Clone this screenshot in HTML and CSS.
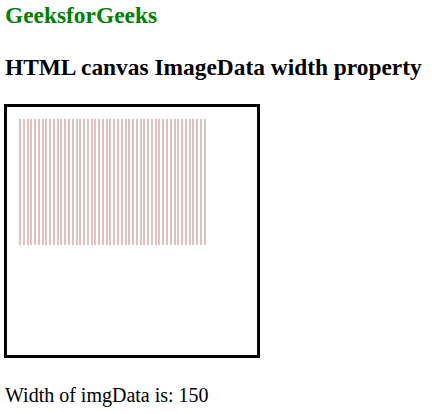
FILE: index.html
```html
<!DOCTYPE html>
<html>
<head>
<meta charset="utf-8">
<link rel="stylesheet" href="styles.css">
</head>
<body>
<h1 class="brand">GeeksforGeeks</h1>
<h2 class="title">HTML canvas ImageData width property</h2>
<div class="canvas">
  <div class="stripes"></div>
</div>
<p class="result">Width of imgData is: 150</p>
</body>
</html>
```
FILE: styles.css
```css
html, body {
  margin: 0;
  padding: 0;
  background: #fff;
}
body {
  padding: 0 4px;
  font-family: "Liberation Serif", "Times New Roman", serif;
  color: #000;
}
.brand {
  margin: 2px 0 0 1px;
  font-size: 23.4px;
  line-height: 27px;
  font-weight: bold;
  color: #008000;
}
.title {
  margin: 25px 0 0 1px;
  font-size: 23.4px;
  line-height: 27px;
  font-weight: bold;
}
.canvas {
  margin-top: 23px;
  width: 250px;
  height: 248px;
  border: 3px solid #000;
  padding: 0;
}
.stripes {
  margin: 12px 0 0 12px;
  width: 187px;
  height: 126px;
  background: repeating-linear-gradient(90deg, #dcc2c2 0 2px, #fff 2px 3.77px);
}
.result {
  margin: 26px 0 0 1px;
  font-size: 20px;
  line-height: 23px;
}
```
